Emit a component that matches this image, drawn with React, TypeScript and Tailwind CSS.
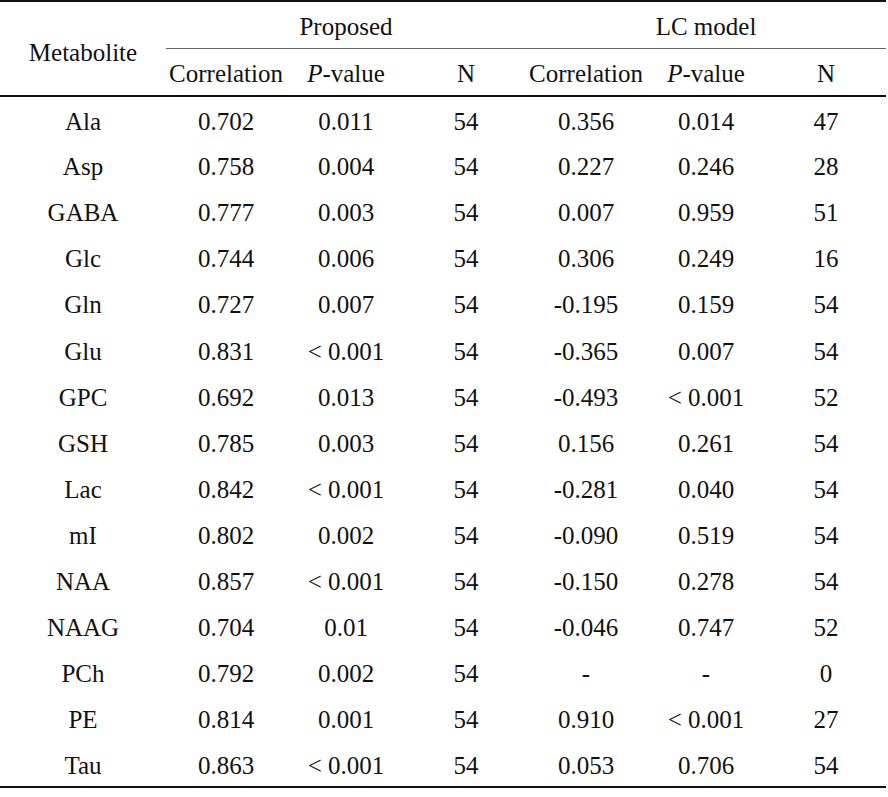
const rows: [string, string, string, string, string, string, string][] = [
  ['Ala', '0.702', '0.011', '54', '0.356', '0.014', '47'],
  ['Asp', '0.758', '0.004', '54', '0.227', '0.246', '28'],
  ['GABA', '0.777', '0.003', '54', '0.007', '0.959', '51'],
  ['Glc', '0.744', '0.006', '54', '0.306', '0.249', '16'],
  ['Gln', '0.727', '0.007', '54', '-0.195', '0.159', '54'],
  ['Glu', '0.831', '< 0.001', '54', '-0.365', '0.007', '54'],
  ['GPC', '0.692', '0.013', '54', '-0.493', '< 0.001', '52'],
  ['GSH', '0.785', '0.003', '54', '0.156', '0.261', '54'],
  ['Lac', '0.842', '< 0.001', '54', '-0.281', '0.040', '54'],
  ['mI', '0.802', '0.002', '54', '-0.090', '0.519', '54'],
  ['NAA', '0.857', '< 0.001', '54', '-0.150', '0.278', '54'],
  ['NAAG', '0.704', '0.01', '54', '-0.046', '0.747', '52'],
  ['PCh', '0.792', '0.002', '54', '-', '-', '0'],
  ['PE', '0.814', '0.001', '54', '0.910', '< 0.001', '27'],
  ['Tau', '0.863', '< 0.001', '54', '0.053', '0.706', '54'],
];

function PValue() {
  return (
    <>
      <i>P</i>-value
    </>
  );
}

export default function App() {
  return (
    <div className="min-h-screen bg-white text-[#111] font-['Liberation_Serif','Times_New_Roman',serif] text-[25px] leading-none">
      <table className="w-[886px] table-fixed border-t-2 border-b-2 border-[#111]">
        <colgroup>
          <col className="w-[166px]" />
          <col className="w-[120px]" />
          <col className="w-[120px]" />
          <col className="w-[120px]" />
          <col className="w-[120px]" />
          <col className="w-[120px]" />
          <col className="w-[120px]" />
        </colgroup>
        <thead>
          <tr className="h-[47px]">
            <th rowSpan={2} className="font-normal text-center align-middle pt-[8px] border-b-2 border-[#111]">
              Metabolite
            </th>
            <th colSpan={3} className="font-normal text-center pt-[3px] border-b border-[#666]">
              Proposed
            </th>
            <th colSpan={3} className="font-normal text-center pt-[3px] border-b border-[#666]">
              LC model
            </th>
          </tr>
          <tr className="h-[48px] border-b-2 border-[#111]">
            <th className="font-normal text-center pt-[3px]">Correlation</th>
            <th className="font-normal text-center pt-[3px]">
              <PValue />
            </th>
            <th className="font-normal text-center pt-[3px]">N</th>
            <th className="font-normal text-center pt-[3px]">Correlation</th>
            <th className="font-normal text-center pt-[3px]">
              <PValue />
            </th>
            <th className="font-normal text-center pt-[3px]">N</th>
          </tr>
        </thead>
        <tbody>
          {rows.map((r) => (
            <tr key={r[0]} className="h-[46.1px]">
              {r.map((cell, i) => (
                <td key={i} className="text-center align-middle pt-[3px]">
                  {cell}
                </td>
              ))}
            </tr>
          ))}
        </tbody>
      </table>
    </div>
  );
}
